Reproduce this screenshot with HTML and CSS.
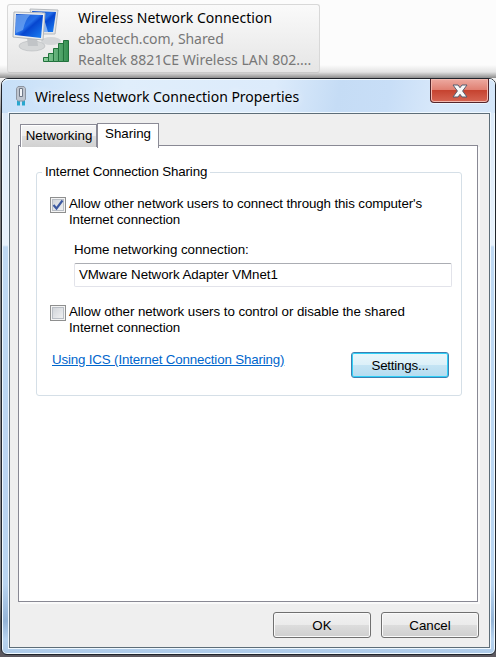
FILE: index.html
```html
<!DOCTYPE html>
<html lang="en">
<head>
<meta charset="utf-8">
<title>Wireless Network Connection Properties</title>
<link rel="stylesheet" href="styles.css">
</head>
<body>
<header class="desktop">
  <section class="connection">
    <svg class="network-icon" width="58" height="56" viewBox="0 0 58 56">
      <defs>
        <linearGradient id="screen" x1="0" y1="0" x2="1" y2="1"><stop offset="0" stop-color="#1753c9"/><stop offset=".45" stop-color="#246ee8"/><stop offset=".55" stop-color="#0646cf"/><stop offset="1" stop-color="#1c83f5"/></linearGradient>
        <linearGradient id="bars" x1="0" y1="0" x2="1" y2="0"><stop offset="0" stop-color="#8fd0a0"/><stop offset="1" stop-color="#359052"/></linearGradient>
      </defs>
      <ellipse cx="39" cy="33" rx="10" ry="4" fill="#d4d6d8"/>
      <path d="M18 1 46 2 43 26 22 26Z" fill="#e4e6e8" stroke="#b7bbbf"/>
      <path d="M20 3 44 4 41 24 24 24Z" fill="url(#screen)"/>
      <path d="M21 4 30 4 36 24 32 24Z" fill="#a9ccfa" opacity=".75"/>
      <ellipse cx="20" cy="38" rx="13" ry="5" fill="#d5d7d8" stroke="#b6b9bc" stroke-width=".6"/>
      <path d="M15 30h10l1 8H16Z" fill="#c1c4c7"/>
      <path d="M2 4 33 5 31 32 1 29Z" fill="#eceeef" stroke="#b3b7bb"/>
      <path d="M4 6 31 7 29 30 3 27Z" fill="url(#screen)"/>
      <path d="M4 7 18 7Q13 12 11 22L4 25Z" fill="#79aef5" opacity=".65"/>
      <g fill="url(#bars)" stroke="#21723c"><path d="M31.500 49.500h5v4h-5zM36.500 45.500h5v8h-5zM41.500 40.500h5v13h-5zM46.500 35.500h5v18h-5zM51.500 32.500h5v21h-5z"/></g>
    </svg>
    <div class="connection-text">
      <div class="name">Wireless Network Connection</div>
      <div class="domain">ebaotech.com, Shared</div>
      <div class="adapter">Realtek 8821CE Wireless LAN 802....</div>
    </div>
  </section>
</header>
<main class="window">
  <header class="titlebar">
    <svg class="plug-icon" width="12" height="21" viewBox="0 0 12 21">
      <path d="M2 14.500h3v5H2zM7 14.500h3v5H7z" fill="#28a7cf"/>
      <path d="M1.500 2.500 3 .5h6l1.500 2v11l-2 1.500h-5l-2-1.500z" fill="#bec5cf" stroke="#8d95a1"/>
      <path d="M4.500 2.500h3v8h-3z" fill="#f1f4f7" stroke="#6f7887"/>
    </svg>
    <h1>Wireless Network Connection Properties</h1>
    <div class="close"><svg width="16" height="14" viewBox="0 0 16 14"><path d="M1 1h5l2 2.700L10 1h5l-4.400 6L15 13h-5l-2-2.700L6 13H1l4.400-6Z" fill="#f8f8f8" stroke="#555d70"/></svg></div>
  </header>
  <div class="client">
    <nav class="tabs"><div class="tab"><span>Networking</span></div><div class="tab active"><span>Sharing</span></div></nav>
    <section class="panel">
      <fieldset>
        <legend>Internet Connection Sharing</legend>
        <div class="option">
          <span class="checkbox"><svg width="12" height="12" viewBox="0 0 12 12"><path d="M1.500 6 4.500 9.500 10.500 1.500" fill="none" stroke="#3b58a0" stroke-width="2.100"/></svg></span>
          <div><span class="line-a">Allow other network users to connect through this computer's</span><br><span class="line-b">Internet connection</span></div>
        </div>
        <div class="home-label"><span>Home networking connection:</span></div>
        <div class="field"><span>VMware Network Adapter VMnet1</span></div>
        <div class="option">
          <span class="checkbox"></span>
          <div><span class="line-c">Allow other network users to control or disable the shared</span><br><span class="line-b">Internet connection</span></div>
        </div>
        <div class="actions"><a>Using ICS (Internet Connection Sharing)</a><div class="button focused"><span>Settings...</span></div></div>
      </fieldset>
    </section>
    <footer><div class="button"><span>OK</span></div><div class="button"><span>Cancel</span></div></footer>
  </div>
</main>
</body>
</html>
```

FILE: styles.css
```css
* { box-sizing: border-box; }
body { margin: 0; width: 496px; height: 657px; overflow: hidden; background: linear-gradient(#fff 0, #fff 75px, #777 120px, #8e8e8e 590px, #555 620px, #5d5960); font: 13.33px/16px "Liberation Sans", Arial, sans-serif; color: #000; }
.desktop { height: 78px; padding: 4px 0 0 7px; background: linear-gradient(#fcfcfc 0, #fcfcfc 65px, #e3e3e3 72px, #8d8d8d 78px); }
.connection { display: flex; width: 313px; height: 69px; border: 1px solid #d8d8d8; border-bottom-color: #c9c9c9; border-radius: 3px; background: linear-gradient(#fafafa, #e5e5e5); padding: 3px 0 0 4px; }
.network-icon { flex: none; }
.connection-text { padding: 0 0 0 8px; font: 14px/21px "Noto Sans", sans-serif; color: #777; white-space: nowrap; margin-top: -1px; }
.name { color: #000; letter-spacing: .02px; }
.domain { letter-spacing: -.05px; }
.adapter { letter-spacing: .02px; }
.window { width: 495px; height: 577px; margin-left: 1px; border: 1px solid #20252c; border-radius: 7px 7px 6px 6px; box-shadow: inset 0 0 0 1px #f1faff; background: linear-gradient(#d9e8f8 0, #e8f2fc 166px, #bfd9f3 168px, #b9d5f1 505px, #94b4d6 542px, #b7d3ef 560px, #aecbe9); padding: 0 6px; }
.titlebar { height: 34px; display: flex; align-items: flex-start; margin: 0 -6px; padding: 0 6px 0 13px; background: linear-gradient(100deg, #c6dff8 0, #e0eefb 25%, #dcebfb 55%, #c5dcf5 68%, #c8def7 78%, #d8e8fa 88%, #d4e6f9); border-radius: 6px 6px 0 0; box-shadow: inset 0 1px #f1faff; }
.plug-icon { margin-top: 7px; }
h1 { margin: 7px 0 0 8px; font: 14px/21px "Noto Sans", sans-serif; white-space: nowrap; letter-spacing: -.03px; text-shadow: 0 0 8px #fff; }
.close { width: 59px; height: 24px; margin-left: auto; border: 1px solid #54252b; border-top: 0; border-radius: 0 0 4px 4px; background: linear-gradient(#edaaa1 0, #df7e70 49%, #c64330 50%, #d66654); box-shadow: inset 0 0 0 1px #f3b9af, 0 1px #edf6ff; display: flex; justify-content: center; padding-top: 5px; }
.client { height: 535px; width: 481px; border: 1px solid #5d6d78; outline: 1px solid #eff8ff; background: #efefef; padding: 7px 10px 0 8px; margin-left: 1px; }
.tabs { display: flex; height: 26px; align-items: flex-end; padding-left: 2px; position: relative; z-index: 1; }
.tab { width: 77px; height: 23px; border: 1px solid #8b8b96; border-bottom: 0; background: linear-gradient(#f5f5f5 0, #ededed 50%, #ddd 51%, #d1d1d1); box-shadow: inset 1px 1px #fff; text-align: center; padding: 3px 0 0 1px; }
.tab.active { width: 62px; height: 25px; background: #fff; margin-bottom: -1px; padding: 2px 0 0; }
.panel { width: 460px; height: 457px; margin-top: -2px; background: #fff; border: 1px solid #898994; box-shadow: 2px 2px #fafafa; padding: 18px 15px 0 17px; }
fieldset { margin: 0; height: 232px; width: 426px; border: 1px solid #d5dfe7; border-radius: 3px; padding: 16px 9px 0 13px; min-width: 0; }
legend { margin-left: -8px; padding: 0 3px; height: 16px; letter-spacing: -.14px; }
.option { display: flex; gap: 3px; white-space: nowrap; height: 32px; }
.checkbox { flex: none; width: 16px; height: 16px; margin-top: 1px; border: 1px solid #8e8f8f; background: linear-gradient(135deg, #cbcfd5, #f6f6f6); box-shadow: inset 0 0 0 1px #f4f4f4, inset 0 0 0 2px #b9bec5; padding: 1px; display: flex; }
.line-a { letter-spacing: -.11px; }
.line-b { letter-spacing: -.12px; }
.line-c { letter-spacing: -.06px; }
.home-label { margin: 14px 0 0 24px; height: 21px; letter-spacing: -.03px; }
.field { margin-left: 24px; width: 378px; height: 24px; border: 1px solid #e2e3ea; border-top-color: #abadb3; border-radius: 2px; padding: 3px 4px; letter-spacing: -.07px; }
.field + .option { margin-top: 17px; }
.actions { display: flex; justify-content: space-between; padding: 16px 3px 0 2px; }
a { color: #06c; text-decoration: underline; height: 16px; letter-spacing: -.16px; }
.button { width: 98px; height: 26px; border: 1px solid #707070; border-radius: 3px; background: linear-gradient(#f2f2f2 0, #ebebeb 49%, #ddd 50%, #cfcfcf); box-shadow: inset 0 0 0 1px #fafafa; text-align: center; padding-top: 5px; }
.focused { border-color: #3c7fb1; background: linear-gradient(#eaf6fb 0, #dcf0f9 49%, #c5e4f4 50%, #b4dcf0); box-shadow: inset 0 0 0 1px #30d0f7; letter-spacing: -.2px; }
footer { display: flex; justify-content: flex-end; gap: 10px; margin: 10px 0 0; }
```
